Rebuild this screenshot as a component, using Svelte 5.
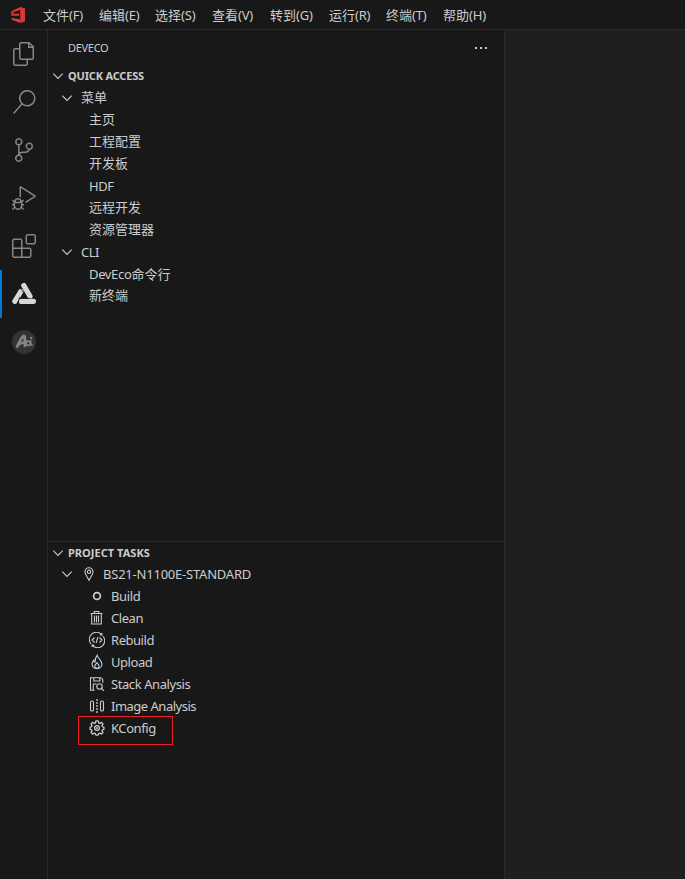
<script>
  const menus = [
    ['文件', '(F)', 56], ['编辑', '(E)', 56], ['选择', '(S)', 57], ['查看', '(V)', 58],
    ['转到', '(G)', 59], ['运行', '(R)', 57], ['终端', '(T)', 57], ['帮助', '(H)', 58]
  ];
  const activities = [
    'M17.5 0h-9L7 1.5V6H2.5L1 7.5v15.07L2.5 24h12.07L16 22.57V18h4.7l1.3-1.43V4.5L17.5 0zm0 2.12l2.38 2.38H17.5V2.12zm-3 20.38h-12v-15H7v9.07L8.5 18h6v4.5zm6-6h-12v-15H16V6h4.5v10.5z',
    'M15.25 0a8.25 8.25 0 0 0-6.18 13.72L1 22.88l1.12 1 8.05-9.12A8.251 8.251 0 1 0 15.25.01V0zm0 15a6.75 6.75 0 1 1 0-13.5 6.75 6.75 0 0 1 0 13.5z',
    'M21.007 8.222A3.738 3.738 0 0 0 15.045 5.2a3.737 3.737 0 0 0 1.156 6.583 2.988 2.988 0 0 1-2.668 1.67h-2.99a4.456 4.456 0 0 0-2.989 1.165V7.4a3.737 3.737 0 1 0-1.494 0v9.117a3.776 3.776 0 1 0 1.816.099 2.99 2.99 0 0 1 2.668-1.667h2.99a4.484 4.484 0 0 0 4.223-3.039 3.736 3.736 0 0 0 3.25-3.687zM4.565 3.738a2.242 2.242 0 1 1 4.484 0 2.242 2.242 0 0 1-4.484 0zm4.484 16.441a2.242 2.242 0 1 1-4.484 0 2.242 2.242 0 0 1 4.484 0zm8.221-9.715a2.242 2.242 0 1 1 0-4.485 2.242 2.242 0 0 1 0 4.485z',
    'M10.94 13.5l-1.32 1.32a3.73 3.73 0 0 0-7.24 0L1.06 13.5 0 14.56l1.72 1.72-.22.22V18H0v1.5h1.5v.08c.077.489.214.966.41 1.42L0 22.94 1.06 24l1.65-1.65A4.308 4.308 0 0 0 6 24a4.31 4.31 0 0 0 3.29-1.65L10.94 24 12 22.94 10.09 21c.198-.464.336-.951.41-1.45v-.1H12V18h-1.5v-1.5l-.22-.22L12 14.56l-1.06-1.06zM6 13.5a2.25 2.25 0 0 1 2.25 2.25h-4.5A2.25 2.25 0 0 1 6 13.5zm3 6a3.33 3.33 0 0 1-3 3 3.33 3.33 0 0 1-3-3v-2.25h6v2.25zm14.76-9.9v1.26L13.5 17.37V15.6l8.5-5.37L9 2v9.46a5.07 5.07 0 0 0-1.5-.72V.63L8.64 0l15.12 9.6z',
    'M13.5 1.5L15 0h7.5L24 1.5V9l-1.5 1.5H15L13.5 9V1.5zm1.5 0V9h7.5V1.5H15zM0 15V6l1.5-1.5H9L10.5 6v7.5H18l1.5 1.5v7.5L18 24H1.5L0 22.5V15zm9-1.5V6H1.5v7.5H9zM9 15H1.5v7.5H9V15zm1.5 7.5H18V15h-7.5v7.5z'
  ];
  const quick = [
    { cjk: '菜单', group: true }, { cjk: '主页' }, { cjk: '工程配置' }, { cjk: '开发板' },
    { latin: 'HDF', ls: -0.45 }, { cjk: '远程开发' }, { cjk: '资源管理器' },
    { latin: 'CLI', ls: -0.55, group: true }, { latin: 'DevEco', cjk: '命令行', ls: -0.35 }, { cjk: '新终端' }
  ];
  const tasks = [
    { icon: 'build', name: 'Build', ls: -0.35 }, { icon: 'clean', name: 'Clean', ls: -0.45 },
    { icon: 'rebuild', name: 'Rebuild', ls: -0.46 }, { icon: 'upload', name: 'Upload', ls: -0.45 },
    { icon: 'stack', name: 'Stack Analysis', ls: -0.42 }, { icon: 'image', name: 'Image Analysis', ls: -0.5 },
    { icon: 'config', name: 'KConfig', ls: -0.42, marked: true }
  ];
</script>

{#snippet chevron()}
  <svg class="chevron" viewBox="0 0 16 16"><path d="M3.3 5.7 8 10.4l4.7-4.7" /></svg>
{/snippet}

<div class="window">
  <header>
    <svg class="logo" viewBox="0 0 16 18">
      <path fill="#d83b38" d="M10.500 1 15 2.500v13L10.500 17 1.500 13.800v-1.900l8.500 1.300V4L4 5.800v2h5v2H1V5.200z" />
      <path fill="#b32b2d" d="M1 5.200 4 4v5.800H1zM10 3.500h1.200v13.200l-1.200.1z" />
    </svg>
    <nav>
      {#each menus as [name, key, width]}
        <div style:width="{width}px">{name}<span class="key">{key}</span></div>
      {/each}
    </nav>
  </header>

  <main>
    <aside class="activity">
      {#each activities as path}
        <div class="activity-item"><svg viewBox="0 0 24 24"><path d={path} /></svg></div>
      {/each}
      <div class="activity-item active">
        <svg viewBox="0 0 24 24" fill="none" stroke-linecap="round" stroke-width="5.200">
          <path d="M11.800 3.500 18 14.300M2.800 19.300 8.800 9.500M9.500 19.400h12" stroke="#d7d7d7" />
          <path d="m8 6 4.500 6M18.500 16.500H9.500M7.400 15.500l-1.700 6" stroke="#181818" stroke-width=".700" />
        </svg>
      </div>
      <div class="activity-item">
        <svg viewBox="0 0 24 24">
          <circle cx="12" cy="12" r="12" fill="#333" />
          <g fill="none" stroke="#858585" stroke-width="2.700" stroke-linecap="round" stroke-linejoin="round">
            <path d="M5.200 16.500c1.700-3 3.500-8.500 6.300-10.500 1.700-.8 1.300 4 1.300 9.800M8 13.800c2.500-1.300 4-1.300 6-2.300" />
            <circle cx="16.200" cy="13.300" r="2.100" stroke-width="1.800" />
            <path d="M18.800 11v3.500q.5 1 1.500.5" stroke-width="1.500" />
          </g>
          <circle cx="19.300" cy="8" r="1.200" fill="#858585" />
        </svg>
      </div>
    </aside>

    <aside class="sidebar">
      <div class="view-title"><span>DEVECO</span><svg viewBox="0 0 16 4"><path d="M1 1h2v2H1zM6 1h2v2H6zM11 1h2v2h-2z" /></svg></div>
      <section class="quick">
        <h2>{@render chevron()}<span class="quick-title">QUICK ACCESS</span></h2>
        {#each quick as row}
          <div class="row" class:leaf={!row.group}>
            {#if row.group}{@render chevron()}{/if}
            <span class="label" class:cjk={!row.latin}>{#if row.latin}<span style:letter-spacing="{row.ls}px">{row.latin}</span>{/if}{row.cjk ?? ''}</span>
          </div>
        {/each}
      </section>
      <section class="project">
        <h2>{@render chevron()}<span class="project-title">PROJECT TASKS</span></h2>
        <div class="row board">
          {@render chevron()}
          <svg class="icon" viewBox="0 0 16 16"><path d="M8 14.2C6.7 11.2 4 9 4 5.7a4 4 0 0 1 8 0C12 9 9.300 11.200 8 14.200z" /><circle cx="8" cy="5.800" r="1.700" /></svg>
          <span class="board-name">BS21-N1100E-STANDARD</span>
        </div>
        {#each tasks as task}
          <div class="row task">
            <svg class="icon" viewBox="0 0 16 16">
              {#if task.icon === 'build'}
                <circle cx="8" cy="8" r="3.400" stroke-width="1.700" />
              {:else if task.icon === 'clean'}
                <path d="M1.500 3.500h12M5.200 3.500v-2h4.600v2M2.700 4v10h9.600V4M5.500 5.500v7M7.500 5.500v7M9.500 5.500v7" />
              {:else if task.icon === 'rebuild'}
                <path d="M2.100 12A7 7 0 0 1 12.500 2.600M13.900 4A7 7 0 0 1 3.500 13.400M12.900.9v2h-2M3.100 15.100v-2h2M5.500 5.500 3 8l2.500 2.500M10.500 5.500 13 8l-2.500 2.500M8.900 5 7.100 11" />
              {:else if task.icon === 'upload'}
                <path d="M8.200 1.200c.3 2.700 4.700 5.500 4.700 9 0 2.800-2 4.400-4.900 4.400s-4.900-1.700-4.900-4.500c0-1.700.7-3 1.700-4 0 1.200.4 1.900 1.100 2.200C6.100 5.500 6.700 3 8.200 1.200z" />
                <path stroke="#a7d5ee" d="M8.100 8.200c0 1.700 2 2.200 2 4 0 1.200-.9 2-2.100 2s-2.200-.8-2.200-2c0-1.500 1.800-2.200 2.300-4z" />
              {:else if task.icon === 'stack'}
                <path d="M5.500 14.300H1.500V1.700h10.300l2 2v3M4.800 2v3h6V2M4.300 14V8h3" />
                <circle cx="10.500" cy="10.500" r="2.700" /><path d="m12.500 12.500 2.300 2.300" />
              {:else if task.icon === 'image'}
                <rect x="1.500" y="3" width="3" height="10" rx="1.300" /><rect x="11.500" y="3" width="3" height="10" rx="1.300" />
                <path d="M8 1v14" stroke-width="1.300" stroke-dasharray="2 1" />
              {:else}
                <path stroke-linejoin="round" stroke-width="1.300" d="M6.900 1.200h2.200l.5 1.900 1.200.5 1.700-1 1.500 1.500-1 1.700.5 1.200 1.400.4v2.200l-1.400.4-.5 1.200 1 1.700-1.500 1.500-1.700-1-1.200.5-.5 1.400H6.900l-.5-1.400-1.200-.5-1.700 1L2 12.900l1-1.700-.5-1.200-1.400-.4V7.400L2.500 7 3 5.800 2 4.100l1.500-1.500 1.700 1 1.200-.5z" transform="translate(0 -.250)" />
                <circle cx="8" cy="8" r="2.400" stroke-width="1.300" /><circle cx="8" cy="8" r=".4" />
              {/if}
            </svg>
            <span style:letter-spacing="{task.ls}px">{task.name}</span>
            {#if task.marked}<i class="marker"></i>{/if}
          </div>
        {/each}
      </section>
    </aside>
    <div class="editor"></div>
  </main>
</div>

<style>
  :global(body) { background: #1f1f1f; }
  .window { height: 879px; display: flex; flex-direction: column; overflow: hidden; background: #181818; color: #ccc; font: 13px/22px "Noto Sans", "Noto Sans CJK SC", sans-serif; white-space: nowrap; }
  header { box-sizing: border-box; height: 30px; display: flex; align-items: center; padding-left: 10px; border-bottom: 1px solid #2b2b2b; }
  .logo { width: 16px; height: 18px; }
  nav { display: flex; padding-left: 17px; }
  .key { letter-spacing: -.2px; }
  main { flex: 1; display: flex; min-height: 0; }
  .activity { width: 47px; border-right: 1px solid #2b2b2b; }
  .activity-item { box-sizing: border-box; height: 48px; display: flex; align-items: center; padding-left: 12px; }
  .activity-item svg { width: 24px; height: 24px; fill: #868686; }
  .active { padding-left: 10px; border-left: 2px solid #0078d4; }
  .active svg { fill: none; }
  .sidebar { width: 456px; display: flex; flex-direction: column; border-right: 1px solid #2b2b2b; }
  .view-title { height: 35px; box-sizing: border-box; display: flex; align-items: center; justify-content: space-between; padding: 0 14px 0 20px; font-size: 11px; letter-spacing: -.3px; }
  .view-title svg { width: 16px; height: 4px; fill: #ccc; }
  .quick { height: 476px; }
  .project { flex: 1; border-top: 1px solid #2b2b2b; }
  h2 { margin: 0; height: 22px; display: flex; align-items: center; gap: 2px; padding-left: 2px; font-size: 11px; font-weight: 700; }
  .project h2 { margin-bottom: -1px; }
  .quick-title { letter-spacing: -.18px; }
  .project-title { letter-spacing: .03px; }
  .chevron { width: 16px; height: 16px; flex: none; fill: none; stroke: #ccc; stroke-width: 1.1; }
  .row { position: relative; height: 22px; display: flex; align-items: center; padding-left: 11px; gap: 6px; }
  .leaf { padding-left: 41px; }
  .cjk { padding-bottom: 2px; }
  .icon { width: 16px; height: 16px; flex: none; fill: none; stroke: #ccc; stroke-width: 1.1; }
  .board-name { letter-spacing: -.22px; }
  .task { padding-left: 41px; }
  .marker { position: absolute; left: 30px; top: -1px; box-sizing: border-box; width: 95px; height: 29px; border: 1px solid #ed1c24; }
  .editor { flex: 1; background: #1f1f1f; }
</style>
